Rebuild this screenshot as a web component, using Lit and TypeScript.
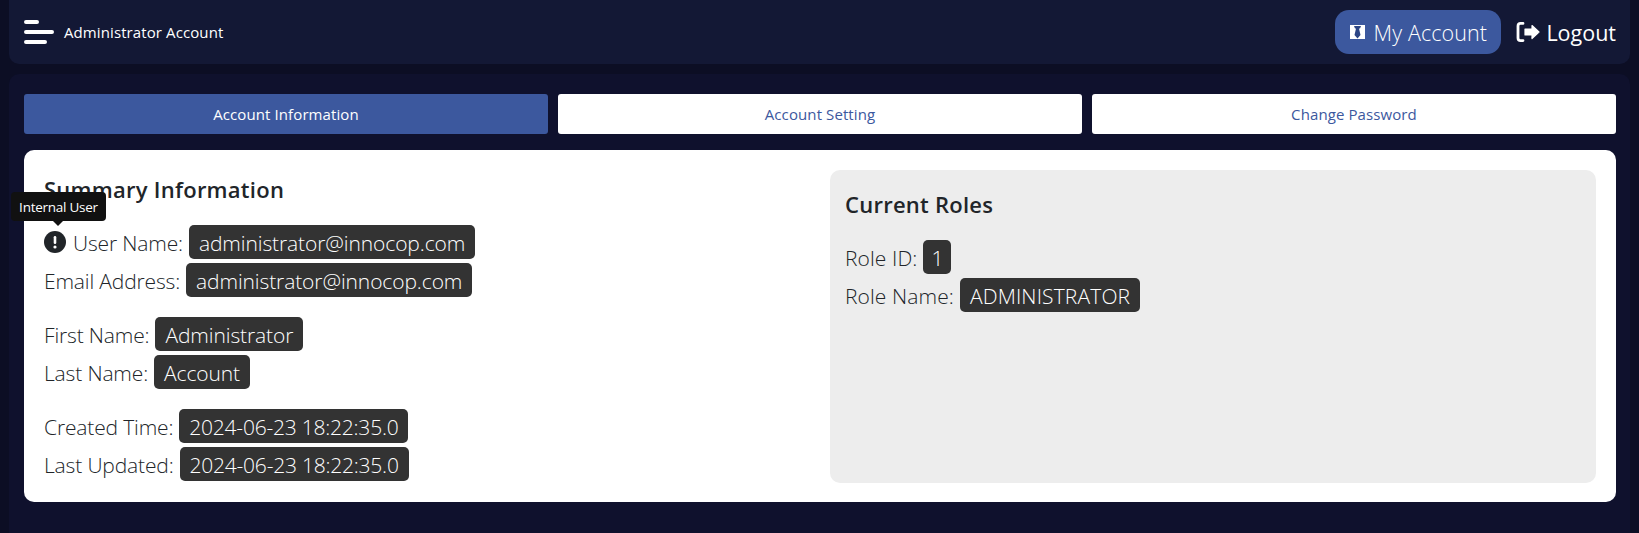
import { LitElement, html, css } from "lit";
import { customElement } from "lit/decorators.js";

@customElement("app-root")
export class AppRoot extends LitElement {
  static styles = css`
    :host { display: block; width: 1639px; height: 533px; overflow: hidden; background: #0c0e24; font-family: "Open Sans", "Noto Sans", sans-serif; color: #212529; }
    * { box-sizing: border-box; }
    .page { display: flex; flex-direction: column; gap: 10px; padding: 0 9px; height: 533px; }
    .top { height: 64px; flex: none; background: #131835; border-radius: 0 0 10px 10px; display: flex; align-items: center; padding: 0 14px 0 15px; color: #fff; }
    .burger { width: 30px; height: 24px; flex: none; margin-right: 10px; }
    .who { font-size: 15px; letter-spacing: 0.1px; }
    .spacer { flex: 1; }
    .account { height: 44px; width: 166px; border-radius: 14px; background: #3c589e; display: flex; align-items: center; justify-content: center; gap: 9px; font-size: 21.5px; font-weight: 300; letter-spacing: 0.1px; margin-right: 15px; }
    .logout { display: flex; align-items: center; gap: 6px; font-size: 21.5px; font-weight: 500; letter-spacing: 0; }
    .main { flex: 1; background: #0f112d; border-radius: 10px 10px 0 0; padding: 20px 14px 0 15px; display: flex; flex-direction: column; gap: 16px; }
    .tabs { display: grid; grid-template-columns: repeat(3, 1fr); gap: 10px; }
    .tab { height: 40px; border-radius: 3px; background: #fff; color: #3c589e; display: flex; align-items: center; justify-content: center; font-size: 15px; letter-spacing: 0.1px; }
    .tab.on { background: #3c589e; color: #fff; }
    .card { height: 352px; background: #fff; border-radius: 10px; padding: 20px; display: grid; grid-template-columns: 1fr 766px; gap: 20px; }
    .left { position: relative; padding-top: 4px; }
    h2 { margin: 0; font-size: 22px; font-weight: 600; line-height: 30px; letter-spacing: 0.25px; }
    .rows { display: flex; flex-direction: column; }
    .left .rows { margin-top: 19px; }
    .row { display: flex; align-items: center; height: 38px; font-size: 21px; font-weight: 300; letter-spacing: -0.15px; gap: 6px; white-space: nowrap; }
    .row span { padding-top: 2px; }
    .row .val { background: #333; color: #fff; border-radius: 5px; padding: 2px 10px 0; height: 34px; display: flex; align-items: center; letter-spacing: -0.1px; }
    .row .val.slim { padding: 2px 9px 0; width: 28px; justify-content: center; }
    .row .val.date { letter-spacing: -0.22px; }
    .gap { margin-top: 16px; }
    .info { width: 22px; height: 22px; flex: none; margin-right: 1px; }
    .tip { position: absolute; left: -33px; top: 22px; height: 29px; width: 95px; background: #111; color: #fff; border-radius: 4px; font-size: 13.5px; display: flex; align-items: center; justify-content: center; letter-spacing: -0.25px; white-space: nowrap; }
    .tip::after { content: ""; position: absolute; left: 42px; bottom: -5px; border: 5px solid transparent; border-bottom: 0; border-top-color: #111; }
    .right { background: #ededed; border-radius: 10px; padding: 19px 15px 15px; }
    .right .rows { margin-top: 19px; }
    .right .row { letter-spacing: 0.1px; }
    .right .row .val { letter-spacing: 0.15px; }
  `;

  row(label: string, value: string, cls = "", valCls = "") {
    return html`<div class="row ${cls}"><span>${label}</span><span class="val ${valCls}">${value}</span></div>`;
  }

  render() {
    return html`<div class="page">
      <div class="top">
        <svg class="burger" viewBox="0 0 30 24"><g stroke="#fff" stroke-width="4" stroke-linecap="round"><path d="M2 2h11M2 12h26M2 22h19"/></g></svg>
        <span class="who">Administrator Account</span>
        <span class="spacer"></span>
        <div class="account">
          <svg width="15" height="14" viewBox="0 0 15 14"><path fill="#fff" d="M0 0h15v14H0z"/><path fill="#2c4585" d="M4 1h7l-1 2.600H9l1.500 6.400-3 3.500-3-3.500L6 3.600H5z"/></svg>
          <span>My Account</span>
        </div>
        <div class="logout">
          <svg width="24" height="22" viewBox="0 0 24 22"><path fill="none" stroke="#fff" stroke-width="2.800" stroke-linecap="round" d="M7 2.400H4.500Q2 2.400 2 5v12q0 2.600 2.500 2.600H7"/><path fill="#fff" stroke="#fff" stroke-width="1.200" stroke-linejoin="round" d="M9 8h7V4.500L23 11l-7 6.500V14H9z"/></svg>
          <span>Logout</span>
        </div>
      </div>
      <div class="main">
        <div class="tabs">
          <div class="tab on">Account Information</div>
          <div class="tab">Account Setting</div>
          <div class="tab">Change Password</div>
        </div>
        <div class="card">
          <div class="left">
            <h2>Summary Information</h2>
            <div class="rows">
              <div class="row">
                <svg class="info" viewBox="0 0 22 22"><circle cx="11" cy="11" r="11" fill="#212529"/><rect x="9.700" y="5" width="2.600" height="8" rx="1.300" fill="#fff"/><circle cx="11" cy="16" r="1.600" fill="#fff"/></svg>
                <span>User Name:</span><span class="val">administrator@innocop.com</span>
              </div>
              ${this.row("Email Address:", "administrator@innocop.com")}
              ${this.row("First Name:", "Administrator", "gap")}
              ${this.row("Last Name:", "Account")}
              ${this.row("Created Time:", "2024-06-23 18:22:35.0", "gap", "date")}
              ${this.row("Last Updated:", "2024-06-23 18:22:35.0", "", "date")}
            </div>
            <div class="tip">Internal User</div>
          </div>
          <div class="right">
            <h2>Current Roles</h2>
            <div class="rows">
              ${this.row("Role ID:", "1", "", "slim")}
              ${this.row("Role Name:", "ADMINISTRATOR")}
            </div>
          </div>
        </div>
      </div>
    </div>`;
  }
}
